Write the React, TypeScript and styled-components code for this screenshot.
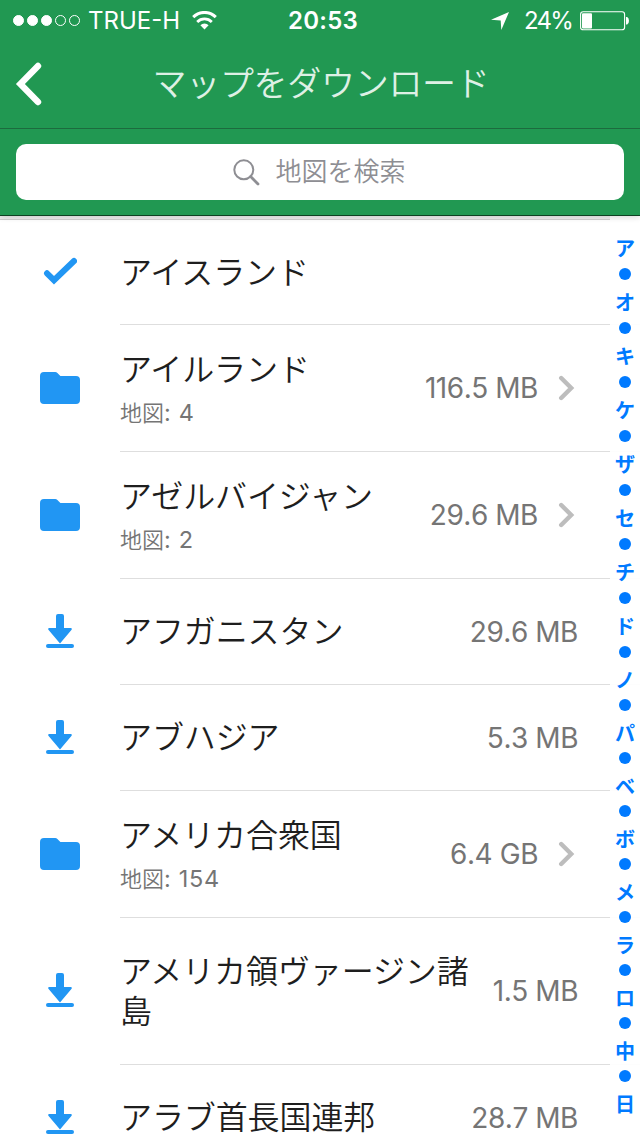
import React from 'react';
import styled, { createGlobalStyle } from 'styled-components';

const latin = `Inter, "Noto Sans CJK JP", sans-serif`;
const japanese = `"Noto Sans CJK JP", "Noto Sans", sans-serif`;

const GlobalStyle = createGlobalStyle`
  *, *::before, *::after { box-sizing: border-box; }
  html, body { margin: 0; padding: 0; background: #fff; }
  body { font-family: ${latin}; overflow: hidden; }
  svg { display: block; }
`;

const Screen = styled.div`
  width: 640px;
  height: 1136px;
  display: flex;
  flex-direction: column;
  overflow: hidden;
  background: #fff;
`;

const Header = styled.header`
  position: relative;
  z-index: 2;
  flex: none;
  background: #219852;
  box-shadow: 0 1px 6px rgba(0, 0, 0, 0.16);
`;

const StatusBar = styled.div`
  display: grid;
  grid-template-columns: 1fr auto 1fr;
  align-items: center;
  height: 40px;
  padding: 2px 10px 0 13px;
  color: #fff;
  font-size: 24px;
  line-height: 38px;
`;

const StatusGroup = styled.div<{ $end?: boolean }>`
  display: flex;
  align-items: center;
  justify-content: ${(p) => (p.$end ? 'flex-end' : 'flex-start')};
  font-weight: 375;

  svg {
    margin-bottom: 1px;
  }
`;

const Signal = styled.div`
  display: flex;
  gap: 3px;
  margin: 0 8px 1px 0;
`;

const SignalDot = styled.span<{ $on: boolean }>`
  width: 11px;
  height: 11px;
  border-radius: 50%;
  border: 1px solid #fff;
  background: ${(p) => (p.$on ? '#fff' : 'transparent')};
`;

const Carrier = styled.span`
  margin-right: 12px;
  letter-spacing: 0;
`;

const Clock = styled.time`
  font-weight: 600;
  letter-spacing: 0.2px;
  padding-left: 3px;
`;

const BatteryLevel = styled.span`
  margin: 0 8px 0 15px;
  letter-spacing: -1.8px;
`;

const NavBar = styled.div`
  display: grid;
  grid-template-columns: 60px 1fr 60px;
  align-items: center;
  height: 89px;
  border-bottom: 1px solid #1c6b3e;
`;

const BackButton = styled.button`
  padding: 0 0 0 14px;
  border: 0;
  background: none;
`;

const Title = styled.h1`
  margin: 0;
  padding: 0 0 4px 2px;
  text-align: center;
  font-family: ${japanese};
  font-size: 34px;
  line-height: 48px;
  font-weight: 350;
  letter-spacing: -0.3px;
  color: #def0e5;
`;

const SearchBar = styled.div`
  height: 87px;
  padding: 15px 16px;
  border-bottom: 1px solid #0d4222;
`;

const SearchField = styled.div`
  display: flex;
  align-items: center;
  justify-content: center;
  gap: 15px;
  height: 56px;
  padding-right: 1px;
  border-radius: 10px;
  background: #fff;
  color: #8e8e93;
`;

const Placeholder = styled.span`
  padding-bottom: 5px;
  font-family: ${japanese};
  font-size: 26px;
  line-height: 38px;
  font-weight: 350;
`;

const Content = styled.main`
  position: relative;
  flex: 1;
  min-height: 0;
  overflow: hidden;
`;

const List = styled.ul`
  margin: 0;
  padding: 0;
  list-style: none;
`;

const SectionEdge = styled.li`
  height: 4px;
  background: #ededed;
  border-bottom: 1px solid #cfcfcf;
`;

const Row = styled.li<{ $height: number }>`
  display: flex;
  height: ${(p) => p.$height}px;
`;

const IconCell = styled.div<{ $lift: number }>`
  flex: 0 0 120px;
  display: flex;
  align-items: center;
  justify-content: center;
  padding-bottom: ${(p) => p.$lift}px;
`;

const RowBody = styled.div`
  flex: 1;
  display: flex;
  align-items: center;
  justify-content: space-between;
  padding-right: 62px;
  border-bottom: 1px solid #dedede;
`;

const Labels = styled.div`
  flex: 0 1 356px;
  padding-bottom: 5px;
  font-family: ${japanese};
`;

const Name = styled.div`
  font-size: 32px;
  line-height: 40px;
  letter-spacing: -0.1px;
  font-weight: 350;
  color: #1e1e1e;
`;

const Count = styled.div`
  display: flex;
  align-items: baseline;
  margin: 8px 0 -5px;
  font-size: 22px;
  line-height: 32px;
  font-weight: 350;
  color: #757575;
`;

const CountNumber = styled.span`
  font-family: ${latin};
  font-size: 23.5px;
  font-weight: 375;
  font-kerning: none;
  letter-spacing: 0.7px;
  white-space: pre;
`;

const Trailing = styled.div`
  flex: none;
  display: flex;
  align-items: center;
  gap: 20px;
  font-size: 28px;
  line-height: 36px;
  font-weight: 375;
  font-kerning: none;
  letter-spacing: -0.45px;
  color: #757575;
`;

const IndexBar = styled.nav`
  position: absolute;
  top: 0;
  bottom: 0;
  right: 0;
  width: 30px;
  padding-top: 18.5px;
  display: flex;
  flex-direction: column;
  align-items: center;
  background: rgba(255, 255, 255, 0.94);
  color: #007aff;
  font-family: ${japanese};
  font-size: 20px;
  font-weight: 700;
`;

const IndexItem = styled.span<{ $height: number }>`
  flex: none;
  display: flex;
  align-items: center;
  justify-content: center;
  height: ${(p) => p.$height}px;
  line-height: 26px;
`;

const IndexDot = styled.i`
  width: 12px;
  height: 12px;
  margin-bottom: 2px;
  border-radius: 50%;
  background: currentColor;
`;

const WifiIcon = () => (
  <svg width="25" height="19" viewBox="0 0 25 19" fill="none" stroke="#fff">
    <path d="M1.2 6.1a16 16 0 0 1 22.6 0" strokeWidth="3" />
    <path d="M5.2 10.9a10.3 10.3 0 0 1 14.6 0" strokeWidth="2.8" />
    <path d="M8.4 14.2a5.8 5.8 0 0 1 8.2 0L12.5 18.4Z" fill="#fff" stroke="none" />
  </svg>
);

const LocationIcon = () => (
  <svg width="18" height="18" viewBox="0 0 18 18" fill="#fff">
    <path d="M18 0 10.3 18 9.7 8.4 0 7.8Z" />
  </svg>
);

const BatteryIcon = () => (
  <svg width="50" height="20" viewBox="0 0 50 20">
    <rect x="0.6" y="0.8" width="44" height="18" rx="2.6" fill="none" stroke="#fff" strokeWidth="1.1" />
    <rect x="2" y="2.2" width="10" height="15.2" rx="1" fill="#fff" />
    <path d="M46 6h1.2q1.8 1 1.8 3.8t-1.8 3.8H46Z" fill="#fff" />
  </svg>
);

const BackIcon = () => (
  <svg width="30" height="44" viewBox="0 0 30 44" fill="none" stroke="#fff" strokeWidth="6.4" strokeLinecap="round">
    <path d="M24 4 6.4 22 24 40" />
  </svg>
);

const SearchIcon = () => (
  <svg width="27" height="27" viewBox="0 0 27 27" fill="none" stroke="#8e8e93">
    <circle cx="10.8" cy="10.8" r="9.5" strokeWidth="2" />
    <path d="M17.6 17.6 25 25" strokeWidth="2.8" strokeLinecap="round" />
  </svg>
);

const CheckIcon = () => (
  <svg width="34" height="28" viewBox="0 0 34 28" fill="none" stroke="#2196f3" strokeWidth="6" strokeLinecap="round">
    <path d="M4 16.3 11 23.2 31 4" />
  </svg>
);

const FolderIcon = () => (
  <svg width="40" height="32" viewBox="0 0 40 32" fill="#2196f3">
    <path d="M4 0H15.2q1.3 0 2.2.9L20.4 4H36a4 4 0 0 1 4 4V28a4 4 0 0 1-4 4H4a4 4 0 0 1-4-4V4a4 4 0 0 1 4-4Z" />
  </svg>
);

const DownloadIcon = () => (
  <svg width="28" height="34" viewBox="0 0 28 34" fill="#2196f3">
    <path d="M12 0h4q2 0 2 2V14h7q1.6.4.6 1.8L14 29.4 2.4 15.8Q1.4 14.4 3 14h7V2q0-2 2-2Z" />
    <rect y="30" width="28" height="4" rx="2" />
  </svg>
);

const ChevronIcon = () => (
  <svg width="20" height="26" viewBox="0 0 20 26" fill="none" stroke="#bdbdbd" strokeWidth="4.4" strokeLinecap="round">
    <path d="M3.2 3 13.2 13 3.2 23" />
  </svg>
);

type Kind = 'done' | 'folder' | 'download';

interface Region {
  kind: Kind;
  name: string;
  height: number;
  maps?: number;
  size?: string;
}

const regions: Region[] = [
  { kind: 'done', name: 'アイスランド', height: 105 },
  { kind: 'folder', name: 'アイルランド', height: 127, maps: 4, size: '116.5 MB' },
  { kind: 'folder', name: 'アゼルバイジャン', height: 127, maps: 2, size: '29.6 MB' },
  { kind: 'download', name: 'アフガニスタン', height: 106, size: '29.6 MB' },
  { kind: 'download', name: 'アブハジア', height: 106, size: '5.3 MB' },
  { kind: 'folder', name: 'アメリカ合衆国', height: 127, maps: 154, size: '6.4 GB' },
  { kind: 'download', name: 'アメリカ領ヴァージン諸島', height: 147, size: '1.5 MB' },
  { kind: 'download', name: 'アラブ首長国連邦', height: 106, size: '28.7 MB' },
];

const icons: Record<Kind, React.FC> = {
  done: CheckIcon,
  folder: FolderIcon,
  download: DownloadIcon,
};

const indexLetters = [...'ア•オ•キ•ケ•ザ•セ•チ•ド•ノ•パ•ベ•ボ•メ•ラ•ロ•中•日'];

const RegionRow = ({ region }: { region: Region }) => {
  const Icon = icons[region.kind];
  return (
    <Row $height={region.height}>
      <IconCell $lift={region.kind === 'folder' ? 1 : 3}>
        <Icon />
      </IconCell>
      <RowBody>
        <Labels>
          <Name>{region.name}</Name>
          {region.maps !== undefined && (
            <Count>
              地図<CountNumber>: {region.maps}</CountNumber>
            </Count>
          )}
        </Labels>
        {region.size && (
          <Trailing>
            {region.size}
            {region.kind === 'folder' && <ChevronIcon />}
          </Trailing>
        )}
      </RowBody>
    </Row>
  );
};

export default function App() {
  return (
    <>
      <GlobalStyle />
      <Screen>
        <Header>
          <StatusBar>
            <StatusGroup>
              <Signal>
                {[true, true, true, false, false].map((on, i) => (
                  <SignalDot key={i} $on={on} />
                ))}
              </Signal>
              <Carrier>TRUE-H</Carrier>
              <WifiIcon />
            </StatusGroup>
            <Clock>20:53</Clock>
            <StatusGroup $end>
              <LocationIcon />
              <BatteryLevel>24%</BatteryLevel>
              <BatteryIcon />
            </StatusGroup>
          </StatusBar>
          <NavBar>
            <BackButton aria-label="戻る">
              <BackIcon />
            </BackButton>
            <Title>マップをダウンロード</Title>
          </NavBar>
          <SearchBar>
            <SearchField>
              <SearchIcon />
              <Placeholder>地図を検索</Placeholder>
            </SearchField>
          </SearchBar>
        </Header>
        <Content>
          <List>
            <SectionEdge />
            {regions.map((region) => (
              <RegionRow key={region.name} region={region} />
            ))}
          </List>
          <IndexBar>
            {indexLetters.map((letter, i) => (
              <IndexItem key={i} $height={i < 16 ? 27 : 26.5}>
                {letter === '•' ? <IndexDot /> : letter}
              </IndexItem>
            ))}
          </IndexBar>
        </Content>
      </Screen>
    </>
  );
}
